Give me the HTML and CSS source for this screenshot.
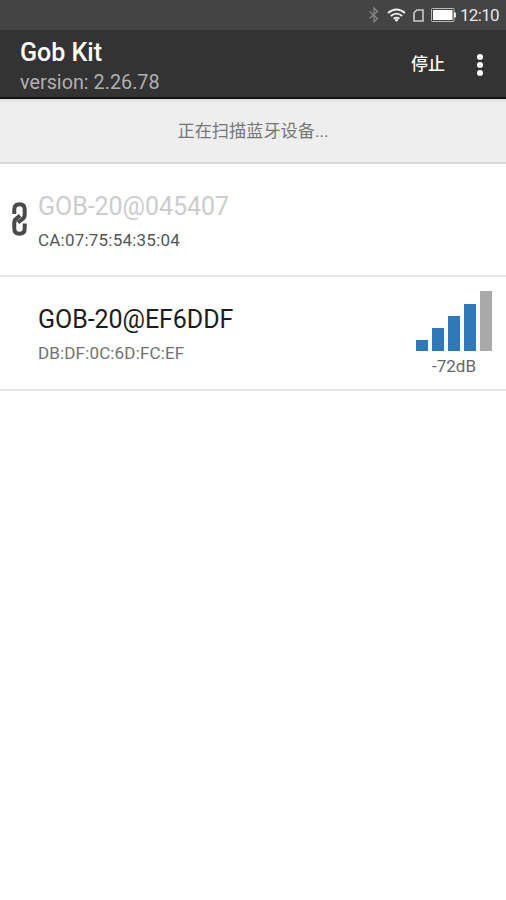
FILE: index.html
```
<!DOCTYPE html>
<html lang="zh">
<head>
	<meta charset="UTF-8">
	<title>Gob Kit</title>
	<link rel="stylesheet" href="styles.css">
</head>
<body>
<div class="status">
	<svg class="bluetooth" width="12" height="16" viewBox="0 0 12 16">
		<path d="M1.5 4.500 9.500 11.500 6 15V1l3.500 3.500-8 7"/>
	</svg>
	<svg class="wifi" width="19" height="14" viewBox="0 0 19 14">
		<path d="M1 5Q9.500-2 18 5M3.800 8Q9.500 3.300 15.200 8M6.600 10.700Q9.500 8.500 12.400 10.700"/>
		<circle cx="9.500" cy="12" r="1.500"/>
	</svg>
	<svg class="sim" width="11" height="13" viewBox="0 0 11 13">
		<path d="M3.800 1H10V12H1V3.800Z"/>
	</svg>
	<svg class="battery" width="25" height="14" viewBox="0 0 25 14">
		<rect x=".5" y=".5" width="22.500" height="13" rx="1"/>
		<path d="M2 2h19.500v10H2zM23 4.500h1.800v5H23z"/>
	</svg>
	<span class="time">12:10</span>
</div>
<div class="header">
	<div class="title">
		<h1>Gob Kit</h1>
		<p>version: 2.26.78</p>
	</div>
	<div class="stop">停止</div>
	<div class="more"><i></i><i></i><i></i></div>
</div>
<div class="scan">正在扫描蓝牙设备...</div>
<ul class="list">
	<li class="bonded">
		<div class="link">
			<svg width="16" height="34" viewBox="0 0 16 34">
				<path d="M2.300 12V7.500Q2.300 2.300 7.500 2.300T12.700 7.500V12.500Q12.700 15.500 10.500 17L6 20.500"/>
				<path d="M12.700 21.500V26.500Q12.700 31.700 7.500 31.700T2.300 26.500V21Q2.300 18 4.500 16.500L8 13.500"/>
			</svg>
		</div>
		<div class="info">
			<h2>GOB-20@045407</h2>
			<p>CA:07:75:54:35:04</p>
		</div>
	</li>
	<li>
		<div class="link"></div>
		<div class="info">
			<h2>GOB-20@EF6DDF</h2>
			<p>DB:DF:0C:6D:FC:EF</p>
		</div>
		<div class="signal">
			<div class="bars">
				<i class="b1"></i><i class="b2"></i><i class="b3"></i><i class="b4"></i><i class="b5"></i>
			</div>
			<p>-72dB</p>
		</div>
	</li>
</ul>
</body>
</html>
```
FILE: styles.css
```
*{
	margin:0;
	padding:0;
	box-sizing: border-box;
}
body{
	background:#fff;
	font-family:Roboto, "Noto Sans CJK SC", sans-serif;
	min-height:900px;
}
/*状态栏*/
.status{
	display: flex;
	align-items: center;
	justify-content: flex-end;
	height: 30px;
	padding-right: 7px;
	background: #444;
	color: #e6e6e6;
}
.status svg{
	fill: none;
	stroke: #eee;
	stroke-width: 1.8;
}
.status .bluetooth{
	stroke: #858585;
	stroke-width: 1.3;
	margin-right: 7px;
}
.status .wifi{
	margin-right: 7px;
}
.wifi circle{
	fill: #eee;
	stroke: none;
}
.status .sim{
	stroke: #ccc;
	stroke-width: 1.6;
	margin-right: 7px;
}
.status .battery{
	stroke: #bbb;
	stroke-width: 1;
	margin-right: 4px;
}
.battery path{
	fill: #fff;
	stroke: none;
}
.time{
	font-size: 17px;
	line-height: 30px;
	letter-spacing: -.7px;
	width: 39px;
	white-space: nowrap;
}
/*标题栏*/
.header{
	display: flex;
	height: 69px;
	padding: 7px 23px 0 20px;
	background: #333;
	border-bottom: 2px solid #111;
	color: #fff;
}
.title{
	flex: 1;
}
.title h1{
	font-size: 25px;
	font-weight: 500;
	line-height: 32px;
}
.title p{
	font-size: 19.8px;
	line-height: 27px;
	color: #b0b0b0;
}
.stop{
	font-size: 17px;
	font-weight: 500;
	line-height: 54px;
	margin-right: 32px;
}
.more{
	padding-top: 17px;
}
.more i{
	display: block;
	width: 6px;
	height: 6px;
	margin-bottom: 2px;
	border-radius: 50%;
	background: #fff;
}
.scan{
	height: 65px;
	line-height: 65px;
	background: linear-gradient(#ddd 0, #eee 4px);
	border-bottom: 2px solid #d8d8d8;
	text-align: center;
	font-size: 17.2px;
	color: #777;
}
/*设备列表*/
.list li{
	display: flex;
	height: 113px;
	border-bottom: 2px solid #e4e4e4;
	list-style: none;
}
.list li:last-child{
	height: 114px;
}
.link{
	width: 38px;
	padding: 38px 0 0 12px;
}
.link path{
	fill: none;
	stroke: #4a4a4a;
	stroke-width: 4;
}
.info{
	flex: 1;
	padding-top: 27px;
}
.info h2{
	font-size: 25px;
	font-weight: 400;
	line-height: 32px;
	letter-spacing: -.05px;
	color: #1c1c1c;
}
.info p{
	font-size: 17px;
	line-height: 24px;
	letter-spacing: .15px;
	margin-top: 5px;
	color: #707070;
}
.bonded h2{
	color: #ccc;
}
.bonded .info p{
	letter-spacing: .22px;
	color: #555;
}
.signal{
	width: 76px;
	margin-right: 14px;
	padding-top: 14px;
}
.bars{
	display: flex;
	align-items: flex-end;
	gap: 4px;
	height: 60px;
}
.bars i{
	width: 12px;
	background: #2e7ab8;
}
.bars .b1{ height: 11px; }
.bars .b2{ height: 23px; }
.bars .b3{ height: 35px; }
.bars .b4{ height: 47px; }
.bars .b5{ height: 60px; background: #a9a9a9; }
.signal p{
	font-size: 17px;
	line-height: 20px;
	margin-top: 5px;
	text-align: center;
	color: #666;
}
```
